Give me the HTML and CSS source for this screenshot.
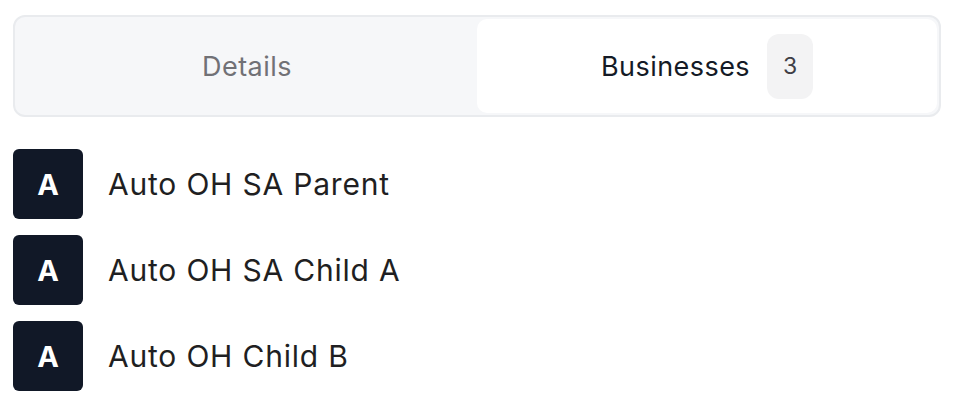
FILE: index.html
```html
<!DOCTYPE html>
<html>
<head>
<meta charset="utf-8">
<link rel="stylesheet" href="styles.css">
</head>
<body>
<div class="page">
  <div class="tabs">
    <div class="tab">Details</div>
    <div class="tab active">Businesses <span class="badge">3</span></div>
  </div>
  <ul class="list">
    <li class="item"><span class="avatar">A</span><span class="name">Auto OH SA Parent</span></li>
    <li class="item"><span class="avatar">A</span><span class="name">Auto OH SA Child A</span></li>
    <li class="item"><span class="avatar">A</span><span class="name">Auto OH Child B</span></li>
  </ul>
</div>
</body>
</html>
```
FILE: styles.css
```css
html, body { margin: 0; padding: 0; background: #fff; }
body { font-family: Inter, "Noto Sans", sans-serif; }
.page { padding: 15px 12px 0 13px; }
.tabs {
  display: grid;
  grid-template-columns: 1fr 1fr;
  height: 102px;
  box-sizing: border-box;
  border: 2px solid #e9ebee;
  border-radius: 12px;
  background: #f6f7f9;
  padding: 2px;
}
.tab {
  display: flex;
  align-items: center;
  justify-content: center;
  font-size: 27px;
  letter-spacing: 0.45px;
  color: #717176;
  border-radius: 10px;
}
.tab.active {
  background: #fff;
  color: #141a26;
  gap: 17px;
}
.badge {
  display: flex;
  align-items: center;
  justify-content: center;
  width: 46px;
  height: 65px;
  border-radius: 12px;
  background: #f3f3f4;
  color: #3f3f46;
  font-size: 23px;
  letter-spacing: 0;
}
.list {
  list-style: none;
  margin: 32px 0 0;
  padding: 0;
  display: flex;
  flex-direction: column;
  gap: 16px;
}
.item { display: flex; align-items: center; gap: 25px; }
.avatar {
  width: 70px;
  height: 70px;
  border-radius: 6px;
  background: #111827;
  color: #fff;
  font-weight: 700;
  font-size: 29px;
  display: flex;
  align-items: center;
  justify-content: center;
}
.name { font-size: 30px; letter-spacing: 0.8px; color: #1f1f22; }
```
